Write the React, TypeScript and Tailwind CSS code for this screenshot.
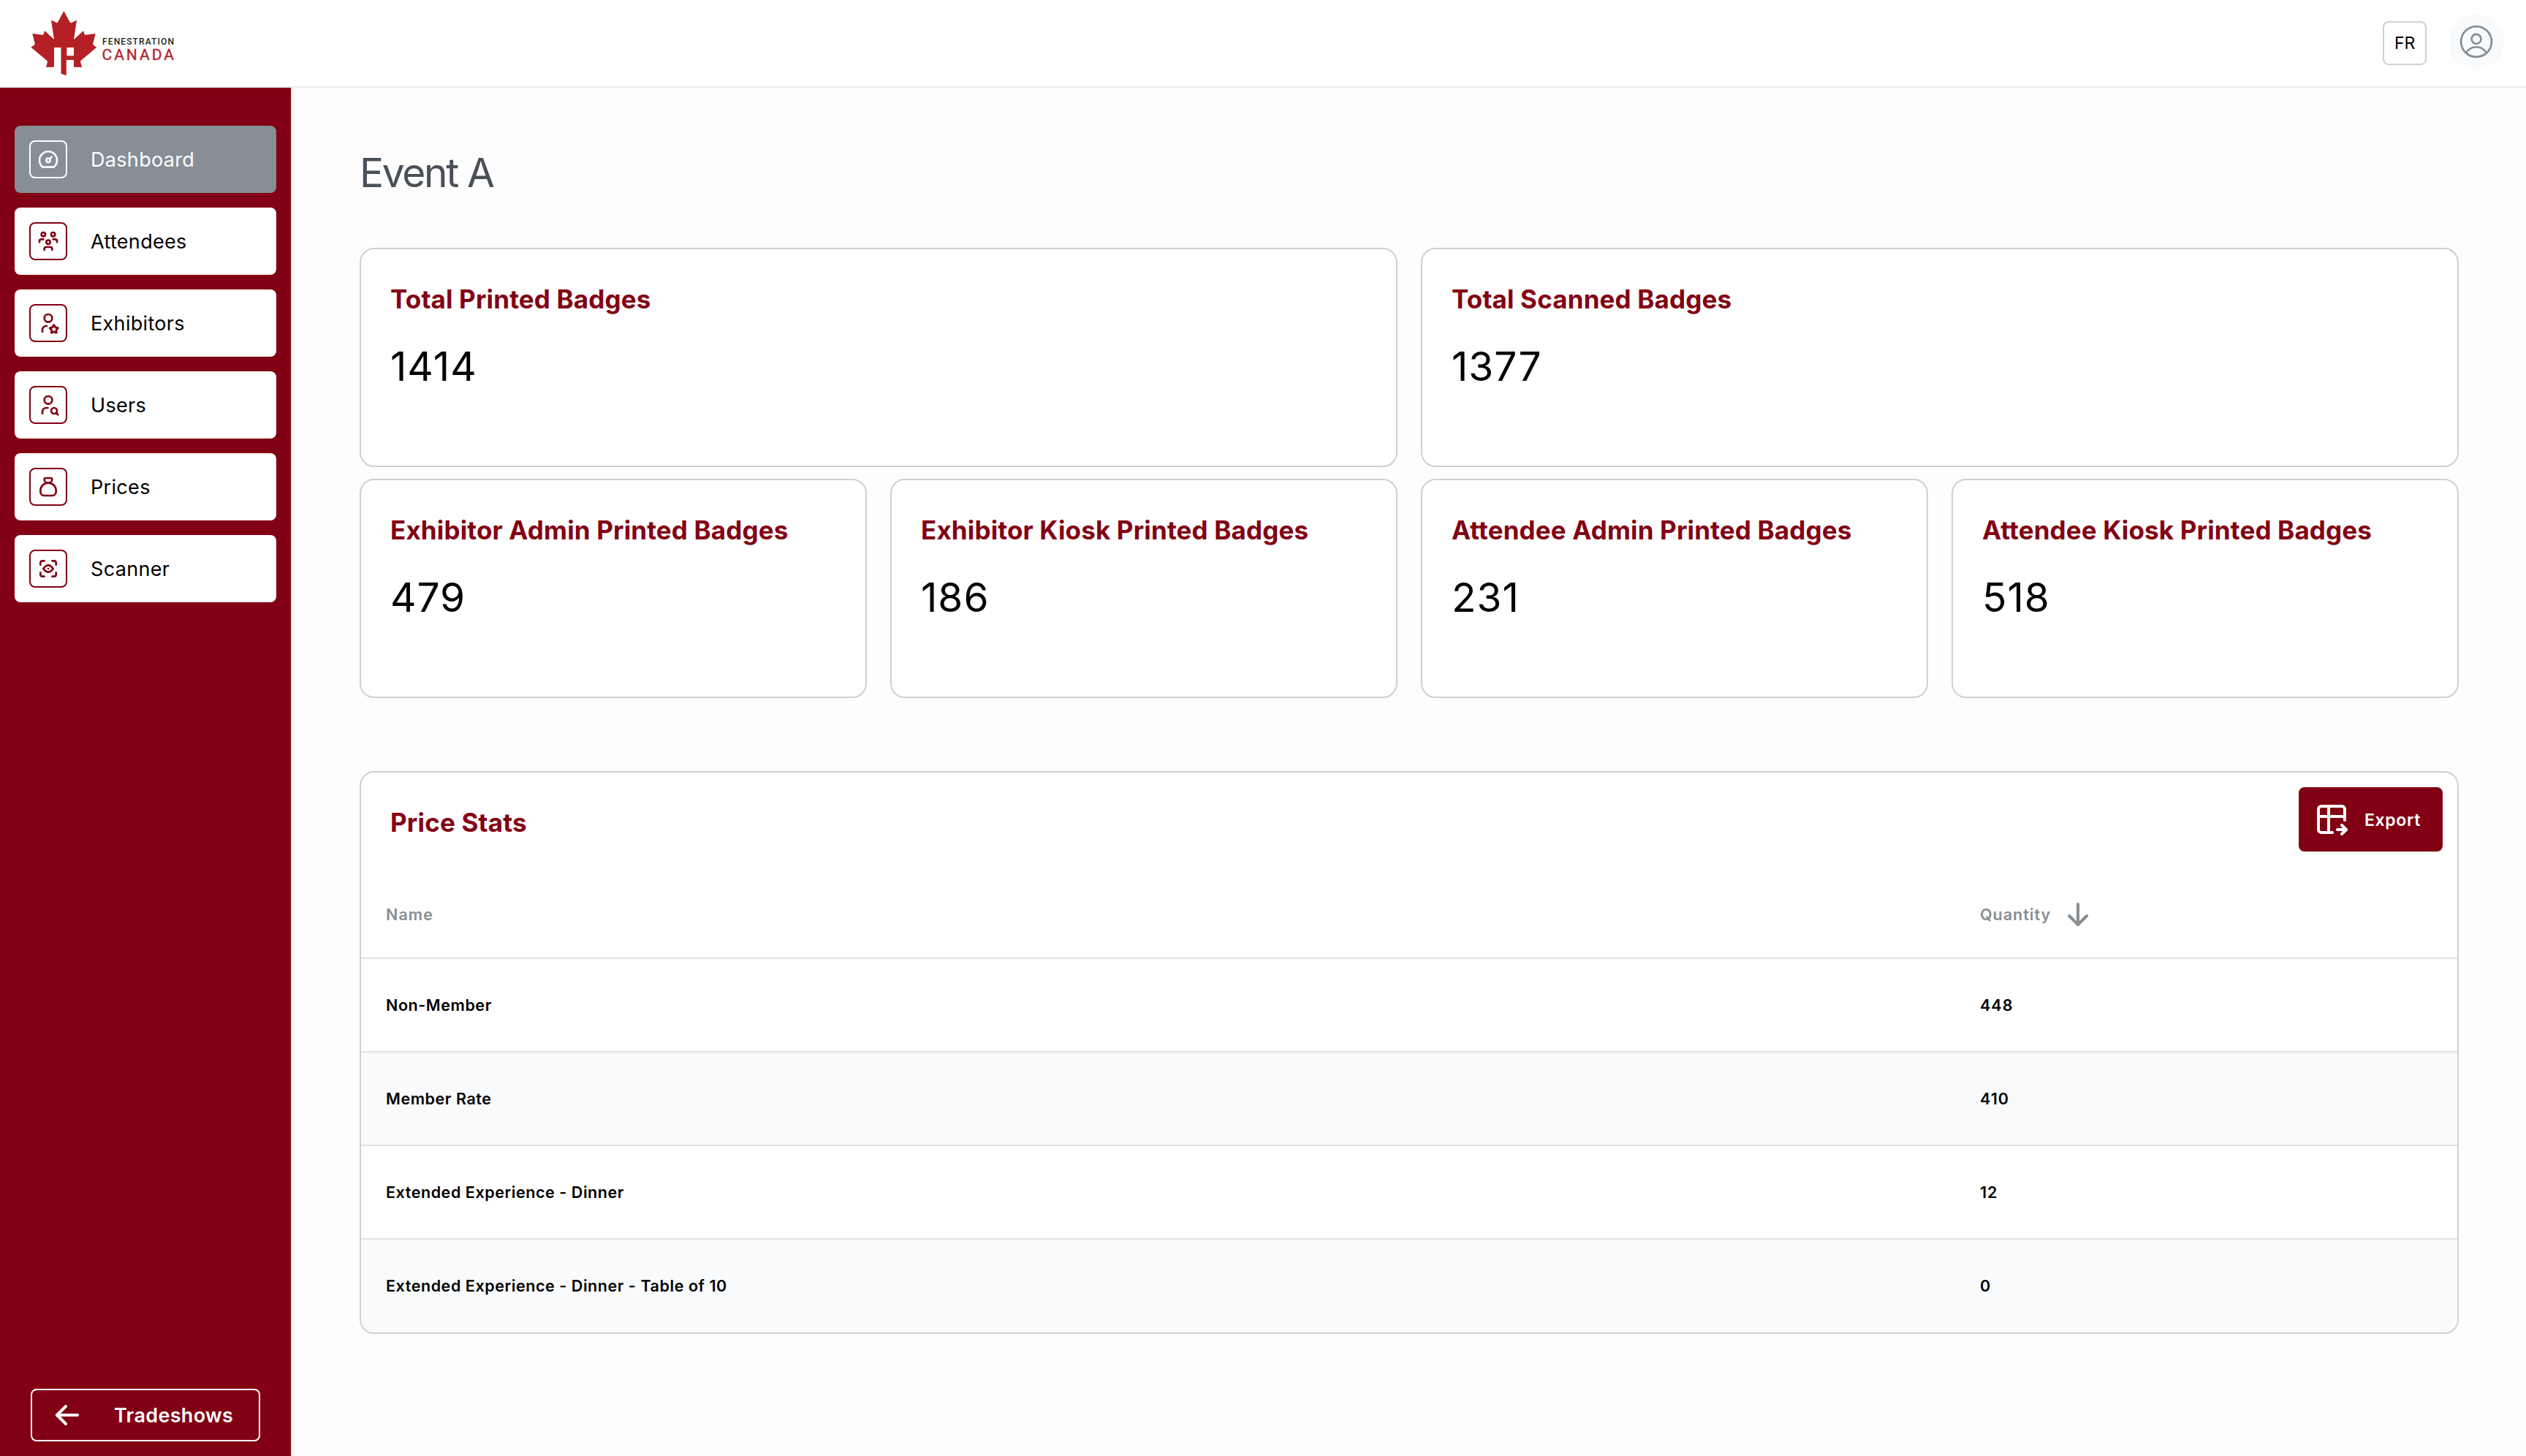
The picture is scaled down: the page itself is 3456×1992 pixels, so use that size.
import {
  TbArrowDown,
  TbArrowLeft,
  TbDashboard,
  TbMoneybag,
  TbScanEye,
  TbTableExport,
  TbUserSearch,
  TbUserStar,
  TbUsersGroup,
} from "react-icons/tb";
import type { IconType } from "react-icons";

const navItems: { label: string; icon: IconType; active?: boolean }[] = [
  { label: "Dashboard", icon: TbDashboard, active: true },
  { label: "Attendees", icon: TbUsersGroup },
  { label: "Exhibitors", icon: TbUserStar },
  { label: "Users", icon: TbUserSearch },
  { label: "Prices", icon: TbMoneybag },
  { label: "Scanner", icon: TbScanEye },
];

const totals = [
  { title: "Total Printed Badges", value: 1414 },
  { title: "Total Scanned Badges", value: 1377 },
];

const breakdown = [
  { title: "Exhibitor Admin Printed Badges", value: 479 },
  { title: "Exhibitor Kiosk Printed Badges", value: 186 },
  { title: "Attendee Admin Printed Badges", value: 231 },
  { title: "Attendee Kiosk Printed Badges", value: 518 },
];

const prices = [
  { name: "Non-Member", quantity: 448 },
  { name: "Member Rate", quantity: 410 },
  { name: "Extended Experience - Dinner", quantity: 12 },
  { name: "Extended Experience - Dinner - Table of 10", quantity: 0 },
];

function Logo() {
  return (
    <svg width="200" height="96" viewBox="40 11 200 96" aria-label="Fenestration Canada">
      <path
        fill="#b42025"
        d="M87.3 15 79.2 30.2Q78.3 31.6 76.6 30.8L70 27.6 74 54 61 42 59.8 46.6Q59.3 48 57.6 47.7L44.3 46 47.6 59.2Q48 61.2 46.4 62L42.4 64.7 64.3 83Q65 83.8 64.8 85L63.2 92 74 91.7V65H83.5V100.8L90.8 103.3V82H101V91.7L112 92 110.2 85Q109.9 83.7 110.8 82.8L132.2 64.7 128.2 62Q126.7 61 127.2 59.2L130.7 46 117.2 47.8Q115.8 48 115.4 46.6L114.3 42 101 54 105 27.6 98.2 31Q96.6 31.7 95.6 30.2ZM91.3 65H101V76.3H91.3Z"
        fillRule="evenodd"
      />
      <text
        x="140"
        y="61"
        textLength="98"
        fontSize="12"
        fontWeight="500"
        fontFamily="Roboto, sans-serif"
        fill="#231f20"
      >
        FENESTRATION
      </text>
      <text
        x="139.5"
        y="81.5"
        textLength="98.5"
        fontSize="21"
        fontWeight="400"
        fontFamily="Roboto, sans-serif"
        fill="#b42025"
        stroke="#b42025"
        strokeWidth="0.3"
      >
        CANADA
      </text>
    </svg>
  );
}

function UserCircle() {
  return (
    <svg width="46" height="46" viewBox="0 0 46 46" fill="none" stroke="#878e93" strokeWidth="2.7">
      <circle cx="23" cy="23" r="20.9" />
      <circle cx="23" cy="19.3" r="6.5" />
      <path d="M9.4 38.2a15.6 15.6 0 0 1 27.2 0" />
    </svg>
  );
}

function Header() {
  return (
    <header className="flex h-[120px] items-center justify-between border-b-2 border-[#ebebeb] bg-white pr-[30px] pl-10">
      <Logo />
      <div className="flex items-center gap-[30px]">
        <button className="flex size-[60px] items-center justify-center rounded-lg border-2 border-[#ced0d2] text-[23px] tracking-[-0.3px]">
          FR
        </button>
        <div className="mb-1 flex size-[76px] items-center justify-center rounded-full bg-[#f8fafc]">
          <UserCircle />
        </div>
      </div>
    </header>
  );
}

function Sidebar() {
  return (
    <aside className="flex w-[400px] flex-col justify-between border-r-2 border-[#f1e6e8] bg-[#820013] px-5 pt-[52px] pb-5">
      <nav className="flex flex-col gap-5">
        {navItems.map(({ label, icon: Icon, active }) => (
          <a
            key={label}
            className={`flex h-[92px] items-center gap-8 rounded-lg px-5 text-[27px] tracking-[0.32px] ${
              active ? "bg-[#868e96] text-white" : "bg-white text-black"
            }`}
          >
            <span
              className={`flex size-[52px] items-center justify-center rounded-lg border-2 ${
                active ? "border-white text-white" : "border-[#820013] text-[#820013]"
              }`}
            >
              <Icon size={32} />
            </span>
            <span className="pt-0.5">{label}</span>
          </a>
        ))}
      </nav>
      <button className="mx-[22px] flex h-[72px] items-center gap-10 rounded-lg border-2 border-white pl-6 text-[27px] font-semibold tracking-[0.32px] text-white">
        <TbArrowLeft size={48} />
        <span className="pt-0.5">Tradeshows</span>
      </button>
    </aside>
  );
}

function StatCard({ title, value }: { title: string; value: number }) {
  return (
    <div className="h-[300px] rounded-[20px] border-2 border-[#cfd0d1] bg-white px-10 pt-11">
      <h2 className="text-[35px] leading-[48px] font-bold tracking-[0.15px] text-[#820013]">
        {title}
      </h2>
      <p className="mt-9 text-[55px] leading-[64px] tracking-[1px]">{value}</p>
    </div>
  );
}

function PriceStats() {
  return (
    <section className="mt-[100px] h-[770px] overflow-hidden rounded-[20px] border-2 border-[#cfd0d1] bg-white">
      <div className="flex h-[135px] items-start justify-between pt-5 pr-5 pl-10">
        <h2 className="pt-6 text-[35px] leading-[48px] font-bold tracking-[0.18px] text-[#820013]">
          Price Stats
        </h2>
        <button className="flex h-[88px] w-[197px] items-center gap-[21px] rounded-lg bg-[#820013] pl-[21px] text-[23px] font-semibold tracking-[0.65px] text-white">
          <TbTableExport size={48} />
          <span className="pt-0.5">Export</span>
        </button>
      </div>
      <table className="w-full table-fixed border-separate border-spacing-0 text-left text-[21.5px]">
        <thead>
          <tr className="h-[120px] text-[#878e93]">
            <th className="w-[2181px] border-b-2 border-[#dfe1e2] pl-[34px] font-semibold tracking-[1.1px]">
              Name
            </th>
            <th className="border-b-2 border-[#dfe1e2] pl-[34px] font-semibold tracking-[0.98px]">
              <span className="flex items-center gap-[13px]">
                Quantity
                <TbArrowDown size={48} />
              </span>
            </th>
          </tr>
        </thead>
        <tbody>
          {prices.map((price) => (
            <tr key={price.name} className="group h-[128px] even:bg-[#f8fafc]">
              <td className="border-b-2 border-[#dfe1e2] pl-[34px] font-semibold tracking-[0.56px] group-last:border-b-transparent">
                {price.name}
              </td>
              <td className="border-b-2 border-[#dfe1e2] pl-[34px] font-semibold tracking-[1px] group-last:border-b-transparent">
                {price.quantity}
              </td>
            </tr>
          ))}
        </tbody>
      </table>
    </section>
  );
}

export default function App() {
  return (
    <div className="flex h-[1992px] w-[3456px] flex-col overflow-hidden bg-[#fdfdfd] font-['Inter',sans-serif] text-black">
      <Header />
      <div className="flex flex-1">
        <Sidebar />
        <main className="flex-1 px-[92px] pt-[76px]">
          <h1 className="text-[55px] leading-[80px] tracking-[-2.3px] text-[#495057]">Event A</h1>
          <div className="mt-[63px] grid grid-cols-2 gap-8">
            {totals.map((stat) => (
              <StatCard key={stat.title} {...stat} />
            ))}
          </div>
          <div className="mt-4 grid grid-cols-4 gap-8">
            {breakdown.map((stat) => (
              <StatCard key={stat.title} {...stat} />
            ))}
          </div>
          <PriceStats />
        </main>
      </div>
    </div>
  );
}
